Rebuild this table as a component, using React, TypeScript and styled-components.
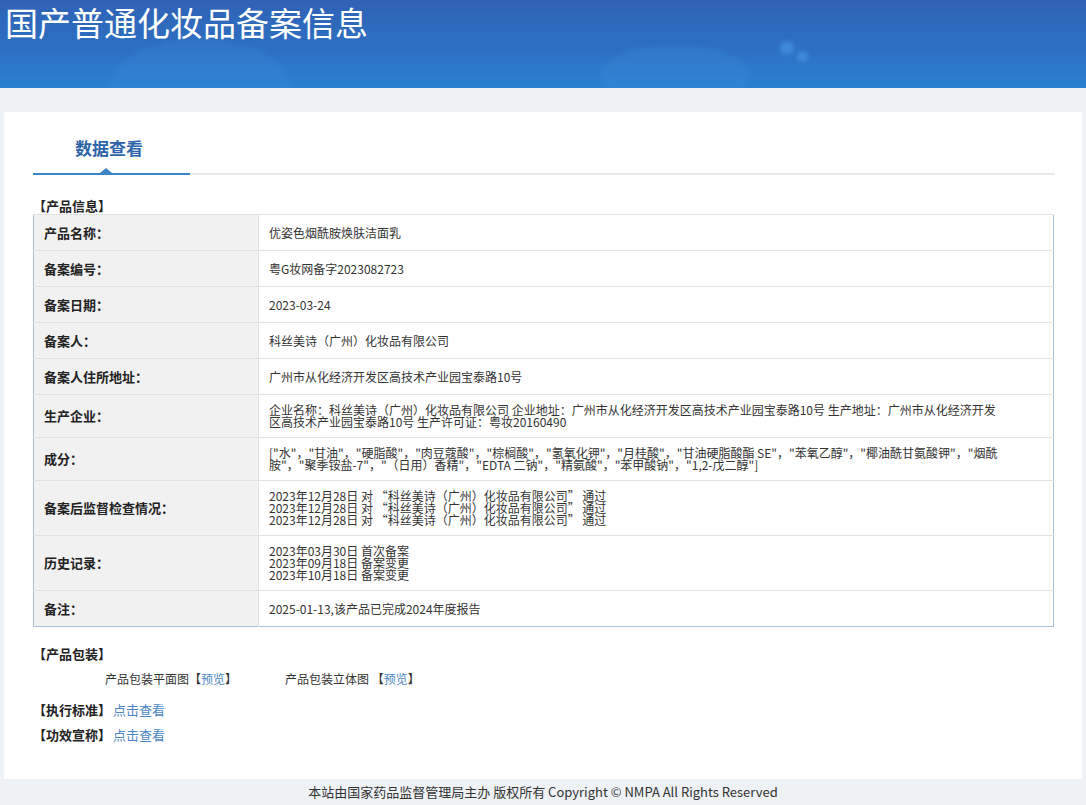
import React from "react";
import styled, { createGlobalStyle } from "styled-components";

const GlobalStyle = createGlobalStyle`
  html, body {
    margin: 0;
    padding: 0;
    background: #eef2f5;
  }
  body {
    font-family: "Noto Sans CJK SC", "Microsoft YaHei", sans-serif;
    color: #333;
  }
  * { box-sizing: border-box; }
`;

const Header = styled.header`
  position: relative;
  height: 88px;
  overflow: hidden;
  background: linear-gradient(180deg, #2f62b5 0%, #2d70c2 55%, #2a80d0 100%);
`;

const Glow = styled.span<{ $x: number; $y: number; $w: number; $h: number; $o: number }>`
  position: absolute;
  left: ${(p) => p.$x}px;
  top: ${(p) => p.$y}px;
  width: ${(p) => p.$w}px;
  height: ${(p) => p.$h}px;
  border-radius: 50%;
  background: rgba(70, 150, 225, ${(p) => p.$o});
  filter: blur(2px);
`;

const Title = styled.h1`
  position: relative;
  z-index: 1;
  margin: 0;
  padding-left: 5px;
  font-size: 33px;
  font-weight: 400;
  line-height: 44px;
  color: #fff;
`;

const Panel = styled.main`
  margin: 24px 4px 0;
  background: #fff;
  padding: 22px 27px 36px 29px;
`;

const TabBar = styled.div`
  display: flex;
  align-items: flex-end;
`;

const Tab = styled.div`
  position: relative;
  width: 157px;
  padding: 0 5px 11px 0;
  border-bottom: 2px solid #3a86c6;
  text-align: center;
  font-size: 17px;
  font-weight: 700;
  line-height: 28px;
  color: #2d63a8;
`;

const TabArrow = styled.span`
  position: absolute;
  left: 67px;
  bottom: 0;
  width: 0;
  height: 0;
  border-left: 6px solid transparent;
  border-right: 6px solid transparent;
  border-bottom: 5px solid #3a86c6;
`;

const TabRest = styled.div`
  flex: 1;
  border-bottom: 2px solid #e6e9ec;
`;

const SectionTitle = styled.div<{ $mt: number }>`
  margin-top: ${(p) => p.$mt}px;
  font-size: 13px;
  font-weight: 700;
  line-height: 16px;
  color: #222;
  display: flex;
  align-items: center;
`;

const DataTable = styled.table`
  width: 1021px;
  border-collapse: collapse;
  table-layout: fixed;
  border: 1px solid #a9c2dc;
  font-size: 12px;
`;

const LabelCell = styled.th`
  width: 225px;
  height: 36px;
  padding: 9px 10px;
  background: #f1f1f1;
  border-top: 1px solid #e2e2e2;
  border-right: 1px solid #e2e2e2;
  text-align: left;
  vertical-align: middle;
  font-size: 13px;
  font-weight: 700;
  line-height: 16px;
  color: #222;
`;

const ValueCell = styled.td`
  height: 36px;
  padding: 9px 10px;
  border-top: 1px solid #e2e2e2;
  vertical-align: middle;
  line-height: 12px;
  color: #333;
`;

const Line = styled.span`
  display: block;
  line-height: 12px;
  white-space: nowrap;
`;

const PackRow = styled.div`
  margin-top: 9px;
  padding-left: 72px;
  display: flex;
  gap: 48px;
  font-size: 12px;
  line-height: 16px;
  color: #333;
`;

const Link = styled.a`
  color: #4b86c4;
  text-decoration: none;
  font-weight: 400;
  cursor: pointer;
`;

const LinkGap = styled.span`
  display: inline-block;
  width: 2px;
`;

const Footer = styled.footer`
  height: 25px;
  line-height: 25px;
  text-align: center;
  font-size: 13px;
  color: #333;
`;

type Row = { label: string; lines: string[] };

const rows: Row[] = [
  { label: "产品名称", lines: ["优姿色烟酰胺焕肤洁面乳"] },
  { label: "备案编号", lines: ["粤G妆网备字2023082723"] },
  { label: "备案日期", lines: ["2023-03-24"] },
  { label: "备案人", lines: ["科丝美诗（广州）化妆品有限公司"] },
  { label: "备案人住所地址", lines: ["广州市从化经济开发区高技术产业园宝泰路10号"] },
  {
    label: "生产企业",
    lines: [
      "企业名称：科丝美诗（广州）化妆品有限公司 企业地址：广州市从化经济开发区高技术产业园宝泰路10号 生产地址：广州市从化经济开发",
      "区高技术产业园宝泰路10号 生产许可证：粤妆20160490",
    ],
  },
  {
    label: "成分",
    lines: [
      '["水"，"甘油"，"硬脂酸"，"肉豆蔻酸"，"棕榈酸"，"氢氧化钾"，"月桂酸"，"甘油硬脂酸酯 SE"，"苯氧乙醇"，"椰油酰甘氨酸钾"，"烟酰',
      '胺"，"聚季铵盐-7"，"（日用）香精"，"EDTA 二钠"，"精氨酸"，"苯甲酸钠"，"1,2-戊二醇"]',
    ],
  },
  {
    label: "备案后监督检查情况",
    lines: [
      "2023年12月28日 对 “科丝美诗（广州）化妆品有限公司” 通过",
      "2023年12月28日 对 “科丝美诗（广州）化妆品有限公司” 通过",
      "2023年12月28日 对 “科丝美诗（广州）化妆品有限公司” 通过",
    ],
  },
  {
    label: "历史记录",
    lines: ["2023年03月30日 首次备案", "2023年09月18日 备案变更", "2023年10月18日 备案变更"],
  },
  { label: "备注", lines: ["2025-01-13,该产品已完成2024年度报告"] },
];

export default function App() {
  return (
    <>
      <GlobalStyle />
      <Header>
        <Glow $x={110} $y={40} $w={180} $h={90} $o={0.18} />
        <Glow $x={600} $y={45} $w={150} $h={60} $o={0.2} />
        <Glow $x={780} $y={41} $w={14} $h={14} $o={0.7} />
        <Glow $x={797} $y={51} $w={11} $h={11} $o={0.7} />
        <Title>国产普通化妆品备案信息</Title>
      </Header>
      <Panel>
        <TabBar>
          <Tab>
            数据查看
            <TabArrow />
          </Tab>
          <TabRest />
        </TabBar>

        <SectionTitle $mt={23}>【产品信息】</SectionTitle>
        <DataTable>
          <tbody>
            {rows.map((r) => (
              <tr key={r.label}>
                <LabelCell>{r.label}：</LabelCell>
                <ValueCell>
                  {r.lines.map((l, i) => (
                    <Line key={i}>{l}</Line>
                  ))}
                </ValueCell>
              </tr>
            ))}
          </tbody>
        </DataTable>

        <SectionTitle $mt={19}>【产品包装】</SectionTitle>
        <PackRow>
          <span>
            产品包装平面图【<Link>预览</Link>】
          </span>
          <span>
            产品包装立体图 【<Link>预览</Link>】
          </span>
        </PackRow>

        <SectionTitle $mt={15}>
          【执行标准】<LinkGap />
          <Link>点击查看</Link>
        </SectionTitle>
        <SectionTitle $mt={9}>
          【功效宣称】<LinkGap />
          <Link>点击查看</Link>
        </SectionTitle>
      </Panel>
      <Footer>本站由国家药品监督管理局主办 版权所有 Copyright © NMPA All Rights Reserved</Footer>
    </>
  );
}
